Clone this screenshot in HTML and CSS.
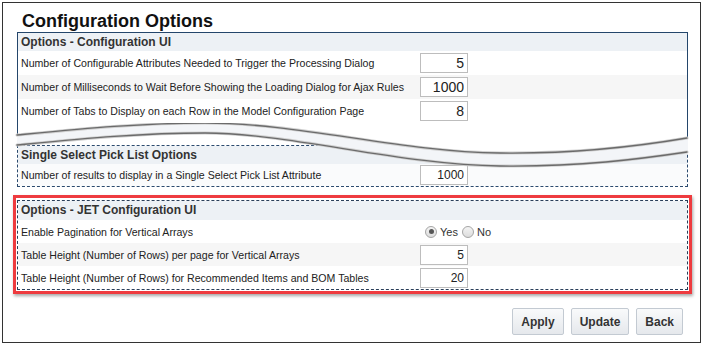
FILE: index.html
```html
<!DOCTYPE html>
<html lang="en">
<head>
<meta charset="UTF-8">
<meta name="viewport" content="width=device-width, initial-scale=1.0">
<title>Configuration Options</title>
<link rel="stylesheet" href="styles.css">
</head>
<body>

<div class="frame">
  <h1 class="title">Configuration Options</h1>

  <div class="panels">
    <div class="box box-ui">
      <div class="box-head">Options - Configuration UI</div>
      <div class="row">
        <span class="label">Number of Configurable Attributes Needed to Trigger the Processing Dialog</span>
        <input class="num big" type="text" value="5">
      </div>
      <div class="row alt">
        <span class="label">Number of Milliseconds to Wait Before Showing the Loading Dialog for Ajax Rules</span>
        <input class="num big" type="text" value="1000">
      </div>
      <div class="row">
        <span class="label">Number of Tabs to Display on each Row in the Model Configuration Page</span>
        <input class="num big" type="text" value="8">
      </div>
    </div>

    <!-- torn edge between the two screenshots -->
    <svg class="tear" viewBox="13 123 679 49" width="679" height="49">
      <path d="M17,123 H688 V138 C640,146 580,154 500,153 C400,152 300,123 205,123 C140,123 80,129 17,135 Z" fill="#fff"/>
      <path d="M17,135 C80,129 140,123 205,123 C300,123 400,152 500,153 C580,154 640,146 688,138 V152 C640,159 580,167 500,166 C400,165 290,133 205,133 C140,133 80,139 17,145 Z" fill="#f3f5f8"/>
      <path d="M17.5,123 V135 M687.5,123 V138" stroke="#24466b" fill="none"/>
      <g fill="none" stroke-linecap="round">
        <path d="M17,135 C80,129 140,123 205,123 C300,123 400,152 500,153 C580,154 640,146 687,138" stroke="#cfcfcf" stroke-width="3"/>
        <path d="M17,145 C80,139 140,133 205,133 C290,133 400,165 500,166 C580,167 640,159 687,152" stroke="#cfcfcf" stroke-width="3"/>
        <path d="M17,135 C80,129 140,123 205,123 C300,123 400,152 500,153 C580,154 640,146 687,138" stroke="#6b6b6b" stroke-width="1.3"/>
        <path d="M17,145 C80,139 140,133 205,133 C290,133 400,165 500,166 C580,167 640,159 687,152" stroke="#6b6b6b" stroke-width="1.3"/>
      </g>
    </svg>

    <div class="box box-pick">
      <div class="box-head">Single Select Pick List Options</div>
      <div class="row">
        <span class="label">Number of results to display in a Single Select Pick List Attribute</span>
        <input class="num" type="text" value="1000">
      </div>
    </div>

    <div class="highlight">
      <div class="box box-jet">
        <div class="box-head">Options - JET Configuration UI</div>
        <div class="row">
          <span class="label">Enable Pagination for Vertical Arrays</span>
          <div class="radios">
            <span class="radio on"></span><span class="radio-text">Yes</span>
            <span class="radio"></span><span class="radio-text">No</span>
          </div>
        </div>
        <div class="row alt">
          <span class="label">Table Height (Number of Rows) per page for Vertical Arrays</span>
          <input class="num" type="text" value="5">
        </div>
        <div class="row">
          <span class="label">Table Height (Number of Rows) for Recommended Items and BOM Tables</span>
          <input class="num" type="text" value="20">
        </div>
      </div>
    </div>
  </div>

  <div class="actions">
    <button type="button">Apply</button>
    <button type="button">Update</button>
    <button type="button">Back</button>
  </div>
</div>

</body>
</html>
```

FILE: styles.css
```css
body {
  margin: 0;
  background-color: #fff;
  font-family: "Liberation Sans", Arial, sans-serif;
  color: #222;
}
.frame {
  margin: 2px;
  width: 699px;
  height: 341px;
  border: 1px solid #333;
  box-sizing: border-box;
}
.title {
  margin: 8px 0 0 19px;
  font-size: 18px;
  line-height: 20px;
  font-weight: bold;
  color: #111;
}
.panels {
  position: relative;
  margin: 1px 0 0 10px;
  width: 679px;
}
.box {
  margin: 0 4px;
  width: 671px;
  box-sizing: border-box;
}
.box-head {
  height: 18px;
  line-height: 18px;
  padding-left: 3px;
  background-color: #edf1f5;
  font-size: 12px;
  font-weight: bold;
  color: #333;
}
.row {
  display: grid;
  grid-template-columns: 399px 48px;
  align-items: center;
  height: 24px;
  padding-left: 3px;
  font-size: 10.6px;
  background-color: #fff;
}
.row.alt {
  background-color: #f6f6f6;
}
.num {
  width: 48px;
  height: 20px;
  box-sizing: border-box;
  margin: 0;
  padding: 0 3px 0 0;
  border: 1px solid #bdbdbd;
  text-align: right;
  font-family: "Liberation Sans", Arial, sans-serif;
  font-size: 12px;
  color: #222;
  background-color: #fff;
}
.num.big {
  font-size: 14px;
}

/* first panel, its bottom is cut by the tear */
.box-ui {
  border: 1px solid #24466b;
  border-bottom: none;
}
.tear {
  position: absolute;
  left: 0;
  top: 91px;
  z-index: 1;
  display: block;
}
.box-pick {
  margin-top: 22px;
  border: 1px dashed #2b4a6e;
}
.box-pick .row {
  height: 22px;
  background-color: #fafbfc;
}

/* red highlight round the JET options */
.highlight {
  margin-top: 8px;
  border: 3px solid #ee3b3f;
  padding: 2px 1px 1px;
  box-sizing: border-box;
  width: 679px;
  box-shadow: 1px 2px 3px rgba(0, 0, 0, 0.35);
}
.box-jet {
  margin: 0;
  border: 1px dashed #2a3f5a;
}
.box-jet .box-head {
  height: 19px;
  line-height: 19px;
}
.box-jet .row {
  height: 23px;
}
.radios {
  display: flex;
  align-items: center;
  width: 120px;
  padding-left: 5px;
  white-space: nowrap;
  font-size: 11px;
}
.radio {
  position: relative;
  flex: none;
  width: 12px;
  height: 12px;
  box-sizing: border-box;
  border: 1px solid #a5a5a5;
  border-radius: 50%;
  background: linear-gradient(#f4f4f4, #dcdcdc);
}
.radio.on::after {
  content: "";
  position: absolute;
  left: 2.5px;
  top: 2.5px;
  width: 5px;
  height: 5px;
  border-radius: 50%;
  background-color: #555;
}
.radio-text {
  margin: 0 4px 0 3px;
  color: #333;
}

.actions {
  display: flex;
  justify-content: flex-end;
  gap: 7px;
  margin-top: 14px;
  padding-right: 17px;
}
.actions button {
  height: 27px;
  padding: 0 8px;
  border: 1px solid #c3cad2;
  border-radius: 2px;
  background: linear-gradient(#f9fafb, #e5e8ec);
  font-family: "Liberation Sans", Arial, sans-serif;
  font-size: 12px;
  font-weight: bold;
  color: #333;
  cursor: pointer;
}
```
